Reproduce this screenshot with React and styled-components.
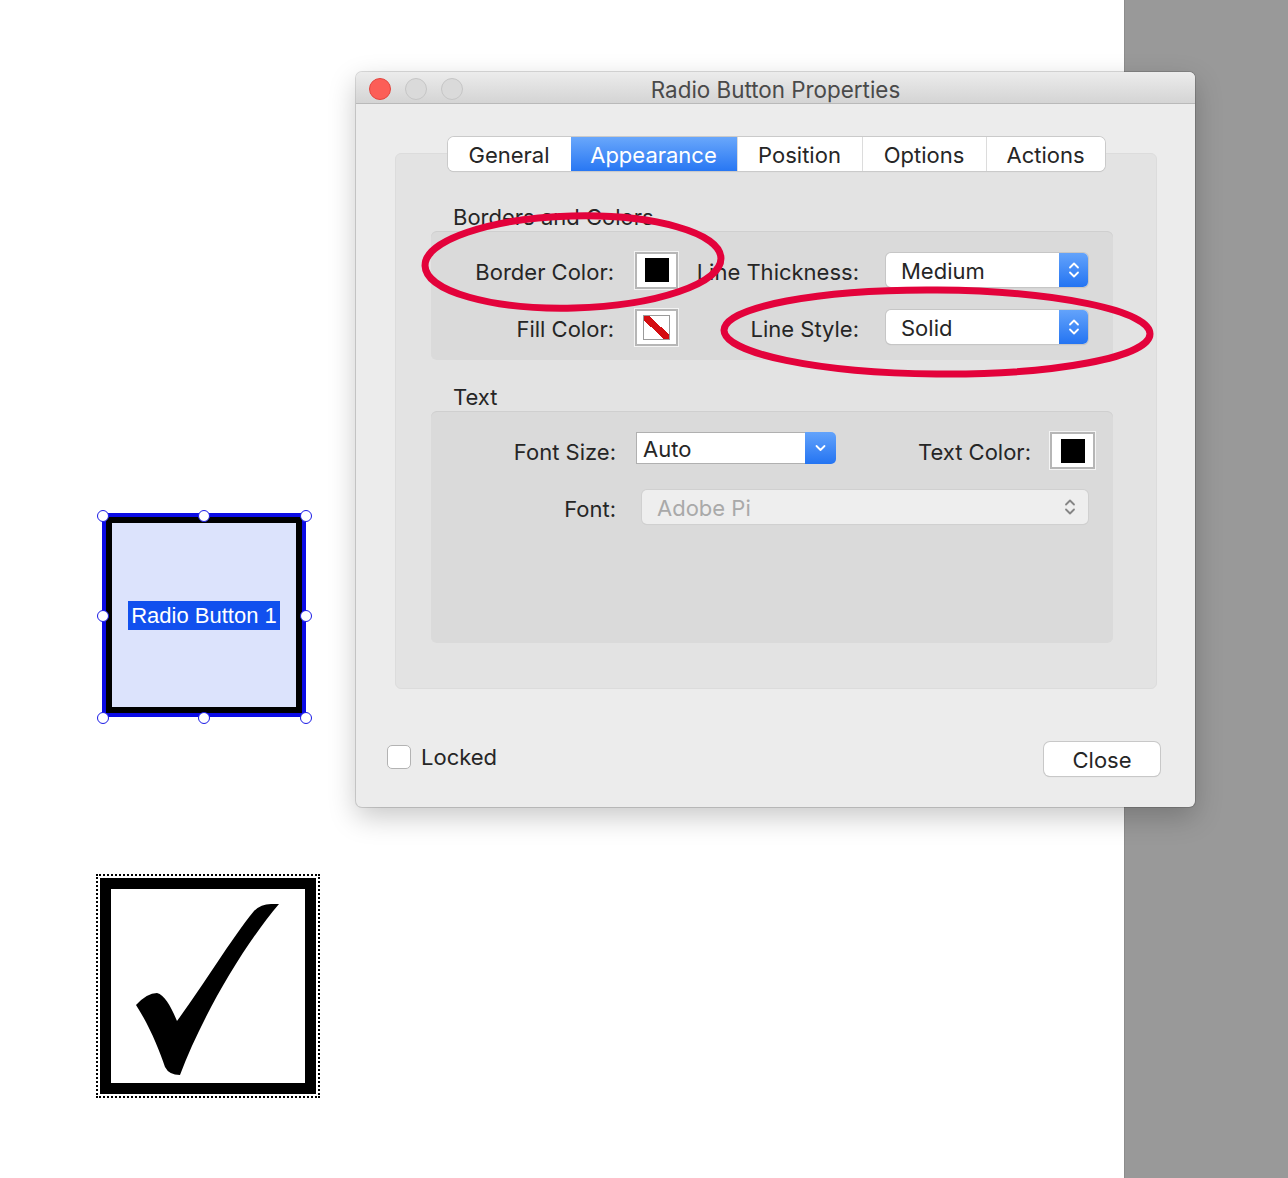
import React from 'react'
import styled, { createGlobalStyle } from 'styled-components'

const Global = createGlobalStyle`
	body {
		margin: 0;
		background: #fff;
		font-family: Inter, 'Noto Sans', sans-serif;
		color: #262626;
	}
`

const Page = styled.div`
	position: relative;
	width: 1288px;
	height: 1178px;
	display: flex;
	overflow: hidden;
`
const DocArea = styled.div`
	position: relative;
	flex: 0 0 1124px;
	background: #fff;
`
const SideStrip = styled.div`
	flex: 1;
	background: #999999;
	border-left: 1px solid #8c8c8c;
`

/* form fields on the document canvas */
const RadioField = styled.div`
	position: absolute;
	left: 102px;
	top: 513px;
	width: 204px;
	height: 204px;
	box-sizing: border-box;
	border: 4px solid #0b0be4;
`
const RadioInner = styled.div`
	height: 100%;
	box-sizing: border-box;
	border: 6px solid #000;
	background: #dce3fc;
	display: flex;
	align-items: center;
	justify-content: center;
`
const RadioCaption = styled.span`
	font-family: 'Liberation Sans', Arial, sans-serif;
	font-size: 22px;
	line-height: 29px;
	color: #fff;
	background: #1150ee;
	padding: 0 3px;
`
const Handle = styled.span`
	position: absolute;
	left: ${(p) => p.$x - 9}px;
	top: ${(p) => p.$y - 9}px;
	width: 10px;
	height: 10px;
	border-radius: 50%;
	background: #fff;
	border: 1.5px solid #1a1ae6;
`
const CheckField = styled.div`
	position: absolute;
	left: 96px;
	top: 874px;
	border: 2px dotted #000;
	padding: 2px;
`
const CheckFrame = styled.div`
	width: 194px;
	height: 194px;
	border: 11px solid #000;
	background: #fff;
`

/* dialog */
const Dialog = styled.div`
	position: absolute;
	left: 356px;
	top: 72px;
	width: 839px;
	background: #ececec;
	border-radius: 6px;
	box-shadow: 0 0 0 1px rgba(0, 0, 0, 0.14), 0 10px 28px rgba(0, 0, 0, 0.22);
	overflow: hidden;
`
const TitleBar = styled.div`
	position: relative;
	height: 32px;
	box-sizing: border-box;
	padding-top: 3px;
	background: linear-gradient(#ececec, #d4d4d4);
	border-bottom: 1px solid #b9b9b9;
	display: flex;
	align-items: center;
	justify-content: center;
`
const Lights = styled.div`
	position: absolute;
	left: 13px;
	top: 6px;
	display: flex;
	gap: 14px;
`
const Light = styled.span`
	width: 20px;
	height: 20px;
	border-radius: 50%;
	background: ${(p) => (p.$red ? '#fc5e57' : '#dadada')};
	border: 1px solid ${(p) => (p.$red ? '#e2463f' : '#c5c5c5')};
`
const Title = styled.span`
	font-size: 22.4px;
	color: #4a4a4a;
`
const Body = styled.div`
	padding: 33px 38px 0 39px;
`
const TabBar = styled.div`
	position: relative;
	z-index: 1;
	display: flex;
	justify-content: center;
	margin-bottom: -18px;
`
const Tabs = styled.div`
	display: flex;
	height: 34px;
	border-radius: 6px;
	background: #fff;
	box-shadow: 0 0 0 1px #cacaca, 0 1px 1px rgba(0, 0, 0, 0.15);
	overflow: hidden;
`
const Tab = styled.div`
	width: ${(p) => p.$w}px;
	display: flex;
	align-items: center;
	justify-content: center;
	padding-top: 2px;
	font-size: 22px;
	color: ${(p) => (p.$active ? '#fff' : '#262626')};
	background: ${(p) => (p.$active ? 'linear-gradient(#69a7fb, #2877f3)' : '#fff')};
	border-left: ${(p) => (p.$first || p.$active ? 'none' : '1px solid #dcdcdc')};
	box-sizing: border-box;
`
const Group = styled.div`
	background: #e3e3e3;
	border: 1px solid #dcdcdc;
	border-radius: 6px;
	padding: 51px 43px 45px 35px;
`
const SectionLabel = styled.div`
	font-size: 22px;
	line-height: 24px;
	padding-left: 22px;
	margin-bottom: 2px;
`
const Inset = styled.div`
	background: #dadada;
	border-radius: 6px;
	box-shadow: inset 0 1px 0 #cfcfcf;
	margin-bottom: ${(p) => p.$mb || 0}px;
`
const ColorsGrid = styled(Inset)`
	display: grid;
	grid-template-columns: 204px 43px 208px 202px;
	grid-auto-rows: 38px;
	row-gap: 19px;
	align-items: center;
	padding: 20px 0 14px;
`
const TextInset = styled(Inset)`
	height: 232px;
	box-sizing: border-box;
	padding: 21px 18px 0 0;
`
const Row = styled.div`
	display: flex;
	align-items: center;
	margin-top: ${(p) => p.$mt || 0}px;
`
const FieldLabel = styled.div`
	font-size: 22px;
	padding-top: 3px;
	text-align: right;
	white-space: nowrap;
	padding-right: ${(p) => p.$pad}px;
	${(p) => (p.$w ? `width: ${p.$w}px;` : 'flex: 1;')}
	box-sizing: border-box;
`
const Swatch = styled.div`
	width: ${(p) => p.$w || 43}px;
	height: 37px;
	box-sizing: border-box;
	background: #fff;
	border: 2px solid #b6b6b6;
	box-shadow: 0 0 0 1px #f4f4f4;
	display: flex;
	align-items: center;
	justify-content: center;
`
const Chip = styled.span`
	width: 24px;
	height: 24px;
	background: #000;
`
const NoFillChip = styled.span`
	width: 25px;
	height: 23px;
	border: 1px solid #9a9a9a;
	background: linear-gradient(
		to top right,
		#fff 40%,
		#d40e12 40%,
		#d40e12 60%,
		#fff 60%
	);
`
const Popup = styled.div`
	width: ${(p) => p.$w}px;
	height: 34px;
	display: flex;
	border-radius: 5px;
	background: ${(p) => (p.$disabled ? '#eeeeee' : '#fff')};
	box-shadow: 0 0 0 1px ${(p) => (p.$disabled ? '#d0d0d0' : '#c6c6c6')},
		0 1px 1px rgba(0, 0, 0, ${(p) => (p.$disabled ? 0.05 : 0.18)});
	overflow: hidden;
`
const PopupText = styled.div`
	flex: 1;
	display: flex;
	align-items: center;
	padding: 2px 0 0 15px;
	font-size: 22px;
	color: ${(p) => (p.$disabled ? '#a9a9a9' : '#262626')};
`
const PopupArrow = styled.div`
	width: ${(p) => (p.$plain ? 36 : 29)}px;
	display: flex;
	align-items: center;
	justify-content: center;
	background: ${(p) => (p.$plain ? 'transparent' : 'linear-gradient(#63a3fb, #2474f2)')};
	color: ${(p) => (p.$plain ? '#858585' : '#fff')};
`
const Combo = styled.div`
	width: 200px;
	height: 32px;
	display: flex;
	align-self: flex-start;
`
const ComboField = styled.div`
	flex: 1;
	background: #fff;
	border: 1px solid #b0b0b0;
	border-right: none;
	display: flex;
	align-items: center;
	padding: 2px 0 0 6px;
	font-size: 22px;
`
const ComboButton = styled.div`
	width: 31px;
	border-radius: 0 5px 5px 0;
	background: linear-gradient(#63a3fb, #2474f2);
	display: flex;
	align-items: center;
	justify-content: center;
	color: #fff;
`
const Footer = styled.div`
	display: flex;
	align-items: center;
	justify-content: space-between;
	height: 34px;
	margin: 51px 0 0;
	padding: 0 35px 33px 31px;
`
const Locked = styled.label`
	display: flex;
	align-items: center;
	gap: 10px;
	font-size: 22px;
`
const Box = styled.span`
	width: 22px;
	height: 22px;
	border-radius: 5px;
	background: #fff;
	border: 1px solid #b3b3b3;
`
const Button = styled.button`
	width: 116px;
	height: 34px;
	padding-top: 3px;
	border-radius: 6px;
	background: #fff;
	border: none;
	box-shadow: 0 0 0 1px #c8c8c8, 0 1px 1px rgba(0, 0, 0, 0.18);
	font-family: inherit;
	font-size: 22px;
	color: #262626;
	margin-top: 4px;
`
const Marks = styled.svg`
	position: absolute;
	left: 0;
	top: 0;
	pointer-events: none;
	z-index: 5;
`

const UpDown = () => (
	<svg width="12" height="20" viewBox="0 0 12 20" fill="none" stroke="currentColor" strokeWidth="1.8" strokeLinecap="round" strokeLinejoin="round">
		<path d="M2 7.5 L6 3.5 L10 7.5" />
		<path d="M2 12.5 L6 16.5 L10 12.5" />
	</svg>
)

const Down = () => (
	<svg width="13" height="10" viewBox="0 0 13 10" fill="none" stroke="currentColor" strokeWidth="1.8" strokeLinecap="round" strokeLinejoin="round">
		<path d="M2.5 3 L6.5 7 L10.5 3" />
	</svg>
)

const tabs = [
	{ label: 'General', w: 123 },
	{ label: 'Appearance', w: 166, active: true },
	{ label: 'Position', w: 125 },
	{ label: 'Options', w: 124 },
	{ label: 'Actions', w: 119 },
]

const handles = [
	[0, 2], [101, 2], [203, 2],
	[0, 102], [203, 102],
	[0, 204], [101, 204], [203, 204],
]

const App = () => (
	<Page>
		<Global />
		<DocArea>
			<RadioField>
				<RadioInner>
					<RadioCaption>Radio Button 1</RadioCaption>
				</RadioInner>
				{handles.map(([x, y]) => (
					<Handle key={`${x}-${y}`} $x={x} $y={y} />
				))}
			</RadioField>
			<CheckField>
				<CheckFrame>
					<svg width="194" height="194" viewBox="0 0 194 194">
						<path
							d="M168 15 L160 15 Q150 15 143 22 C120 50 90 100 66 132 C60 118 54 106 46 104 Q36 104 25 116 C38 136 48 160 54 178 Q58 186 69 186 C90 130 130 60 168 15 Z"
							fill="#000"
						/>
					</svg>
				</CheckFrame>
			</CheckField>
		</DocArea>
		<SideStrip />

		<Dialog>
			<TitleBar>
				<Lights>
					<Light $red />
					<Light />
					<Light />
				</Lights>
				<Title>Radio Button Properties</Title>
			</TitleBar>
			<Body>
				<TabBar>
					<Tabs>
						{tabs.map((t, i) => (
							<Tab key={t.label} $w={t.w} $active={t.active} $first={i === 0}>
								{t.label}
							</Tab>
						))}
					</Tabs>
				</TabBar>
				<Group>
					<SectionLabel>Borders and Colors</SectionLabel>
					<ColorsGrid $mb={25}>
						<FieldLabel $pad={21}>Border Color:</FieldLabel>
						<Swatch>
							<Chip />
						</Swatch>
						<FieldLabel $pad={27}>Line Thickness:</FieldLabel>
						<Popup $w={202}>
							<PopupText>Medium</PopupText>
							<PopupArrow>
								<UpDown />
							</PopupArrow>
						</Popup>
						<FieldLabel $pad={21}>Fill Color:</FieldLabel>
						<Swatch>
							<NoFillChip />
						</Swatch>
						<FieldLabel $pad={27}>Line Style:</FieldLabel>
						<Popup $w={202}>
							<PopupText>Solid</PopupText>
							<PopupArrow>
								<UpDown />
							</PopupArrow>
						</Popup>
					</ColorsGrid>
					<SectionLabel>Text</SectionLabel>
					<TextInset>
						<Row>
							<FieldLabel $w={205} $pad={20}>Font Size:</FieldLabel>
							<Combo>
								<ComboField>Auto</ComboField>
								<ComboButton>
									<Down />
								</ComboButton>
							</Combo>
							<FieldLabel $pad={19}>Text Color:</FieldLabel>
							<Swatch $w={45}>
								<Chip />
							</Swatch>
						</Row>
						<Row $mt={21}>
							<FieldLabel $w={211} $pad={26}>Font:</FieldLabel>
							<Popup $w={446} $disabled>
								<PopupText $disabled>Adobe Pi</PopupText>
								<PopupArrow $plain>
									<UpDown />
								</PopupArrow>
							</Popup>
						</Row>
					</TextInset>
				</Group>
			</Body>
			<Footer>
				<Locked>
					<Box />
					Locked
				</Locked>
				<Button>Close</Button>
			</Footer>
		</Dialog>

		<Marks width="1288" height="1178" viewBox="0 0 1288 1178">
			<ellipse cx="573" cy="262" rx="148" ry="46" transform="rotate(-1.5 573 262)" fill="none" stroke="#e3023b" strokeWidth="7" />
			<ellipse cx="937" cy="332" rx="213" ry="42" transform="rotate(0.5 937 332)" fill="none" stroke="#e3023b" strokeWidth="7" />
		</Marks>
	</Page>
)

export default App
